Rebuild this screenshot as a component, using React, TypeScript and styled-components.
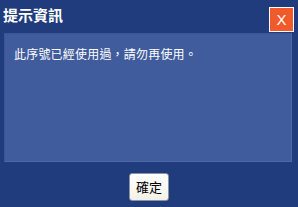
import styled, { createGlobalStyle } from "styled-components";

const GlobalStyle = createGlobalStyle`
  html, body {
    margin: 0;
    padding: 0;
    background: #213c7c;
  }
  body {
    font-family: "Noto Sans CJK TC", "Noto Sans", sans-serif;
  }
`;

const Dialog = styled.div`
  width: 298px;
  height: 207px;
  background: #213c7c;
  display: flex;
  flex-direction: column;
  box-sizing: border-box;
`;

const Header = styled.div`
  height: 33px;
  display: flex;
  align-items: flex-start;
  justify-content: space-between;
  padding: 0 4px 0 3px;
  box-sizing: border-box;
`;

const Title = styled.div`
  color: #ffffff;
  font-size: 15px;
  font-weight: 700;
  line-height: 18px;
  margin-top: 6px;
`;

const CloseButton = styled.button`
  margin-top: 7px;
  width: 25px;
  height: 25px;
  padding: 0;
  border: 1px solid #ffffff;
  background: #f15a2b;
  color: #ffffff;
  font-family: "Liberation Sans", Arial, sans-serif;
  font-size: 15px;
  line-height: 23px;
  text-align: center;
  box-sizing: border-box;
`;

const Panel = styled.div`
  margin: 0 6px 0 4px;
  height: 129px;
  background: #405c9d;
  border: 1px solid #4c68a8;
  border-left-color: #3a5694;
  border-top-color: #3a5694;
  box-sizing: border-box;
  padding: 11px 9px;
`;

const Message = styled.div`
  color: #ffffff;
  font-size: 12px;
  letter-spacing: 0.2px;
  line-height: 18px;
`;

const Footer = styled.div`
  flex: 1;
  display: flex;
  justify-content: center;
  padding-top: 11px;
  box-sizing: border-box;
`;

const OkButton = styled.button`
  width: 40px;
  height: 28px;
  padding: 0;
  border: 1px solid #8a93a6;
  border-radius: 3px;
  background: linear-gradient(#ffffff, #f3f1e6);
  color: #000000;
  font-family: "Noto Sans CJK TC", sans-serif;
  font-size: 13px;
  line-height: 26px;
  box-sizing: border-box;
`;

export default function App() {
  return (
    <>
      <GlobalStyle />
      <Dialog>
        <Header>
          <Title>提示資訊</Title>
          <CloseButton>X</CloseButton>
        </Header>
        <Panel>
          <Message>此序號已經使用過，請勿再使用。</Message>
        </Panel>
        <Footer>
          <OkButton>確定</OkButton>
        </Footer>
      </Dialog>
    </>
  );
}
